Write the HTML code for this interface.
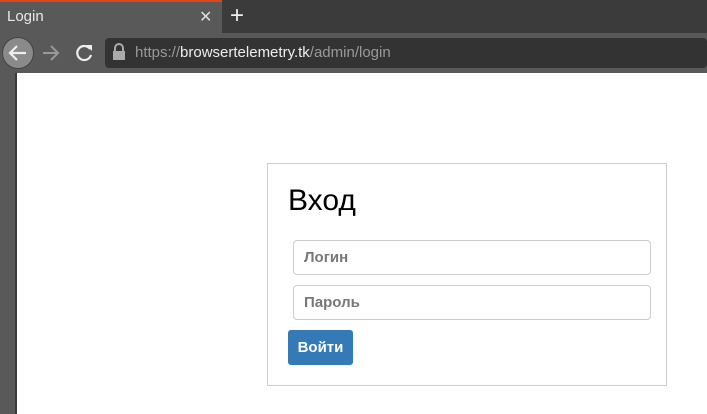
<!DOCTYPE html>
<html><head><meta charset="utf-8"><style>
*{margin:0;padding:0;box-sizing:border-box}
body{width:707px;height:414px;overflow:hidden;background:#fff;font-family:"Liberation Sans",sans-serif;position:relative}
.abs{position:absolute}
</style></head><body>
<div class="abs" style="left:0;top:0;width:707px;height:33px;background:#3b3b3b"></div>
<div class="abs" style="left:0;top:0;width:222px;height:33px;background:#595959"></div>
<div class="abs" style="left:0;top:0;width:222px;height:2px;background:#e0461c"></div>
<div class="abs" style="left:7px;top:8px;color:#e8e8e8;font-size:15px">Login</div>
<div class="abs" style="left:199px;top:7px;color:#ddd;font-size:16px">✕</div>
<div class="abs" style="left:230px;top:2px;color:#eee;font-size:24px">+</div>
<div class="abs" style="left:0;top:33px;width:707px;height:40px;background:#595959"></div>
<div class="abs" style="left:2px;top:37px;width:32px;height:32px;border-radius:50%;background:#8a8a8a;border:1px solid #444"></div>
<svg class="abs" style="left:0;top:33px" width="105" height="40">
<path d="M26 20H10M17 13l-7 7 7 7" stroke="#eee" stroke-width="2.2" fill="none"/>
<path d="M58 20H43M51 13l7 7-7 7" stroke="#999" stroke-width="2" fill="none"/>
<path d="M90 16a7 7 0 1 0 1 6" stroke="#eee" stroke-width="2.2" fill="none"/>
<path d="M86 12h6v6z" fill="#eee"/>
</svg>
<div class="abs" style="left:105px;top:38px;width:602px;height:30px;background:#333;border-radius:4px"></div>
<svg class="abs" style="left:112px;top:43px" width="14" height="18"><path d="M3 8V5a4 4 0 0 1 8 0v3" stroke="#aaa" stroke-width="2" fill="none"/><rect x="1" y="8" width="12" height="9" fill="#aaa"/></svg>
<div class="abs" style="left:135px;top:44px;font-size:15px;color:#999">https://<span style="color:#eee">browsertelemetry.tk</span>/admin/login</div>
<div class="abs" style="left:0;top:73px;width:15px;height:341px;background:#595959"></div>
<div class="abs" style="left:15px;top:73px;width:2px;height:341px;background:#3b3b3b"></div>
<div class="abs" style="left:267px;top:163px;width:400px;height:223px;border:1px solid #ccc"></div>
<div class="abs" style="left:288px;top:184px;font-size:30px;color:#000">Вход</div>
<div class="abs" style="left:293px;top:240px;width:358px;height:35px;border:1px solid #ccc;border-radius:4px;font-weight:bold;color:#777;font-size:15px;padding:8px 10px">Логин</div>
<div class="abs" style="left:293px;top:285px;width:358px;height:35px;border:1px solid #ccc;border-radius:4px;font-weight:bold;color:#777;font-size:15px;padding:8px 10px">Пароль</div>
<div class="abs" style="left:288px;top:330px;width:65px;height:35px;background:#337ab7;border-radius:3px;color:#fff;font-weight:bold;font-size:15px;text-align:center;line-height:35px">Войти</div>
</body></html>
